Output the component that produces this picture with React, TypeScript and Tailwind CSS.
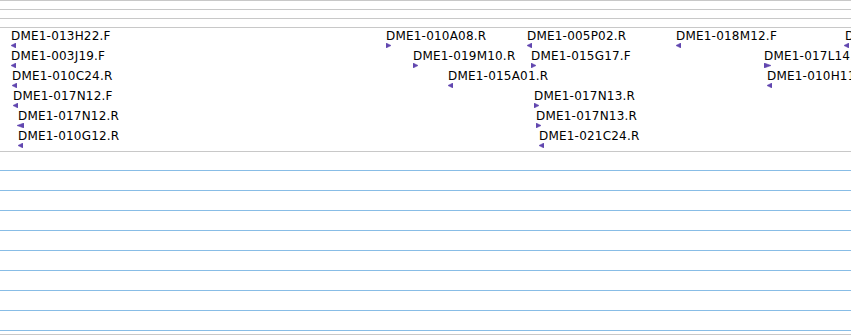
type Feature = { label: string; x: number; tx: number; row: number; dir: "L" | "R"; wide?: boolean };

const features: Feature[] = [
  { label: "DME1-013H22.F", x: 11, tx: 11, row: 0, dir: "L" },
  { label: "DME1-010A08.R", x: 386, tx: 386, row: 0, dir: "R" },
  { label: "DME1-005P02.R", x: 527, tx: 527, row: 0, dir: "L" },
  { label: "DME1-018M12.F", x: 676, tx: 676, row: 0, dir: "L" },
  { label: "DME1-009B07.R", x: 845, tx: 844, row: 0, dir: "L" },
  { label: "DME1-003J19.F", x: 11, tx: 11, row: 1, dir: "L" },
  { label: "DME1-019M10.R", x: 413, tx: 413, row: 1, dir: "R" },
  { label: "DME1-015G17.F", x: 531, tx: 531, row: 1, dir: "R" },
  { label: "DME1-017L14.F", x: 764, tx: 764, row: 1, dir: "R", wide: true },
  { label: "DME1-010C24.R", x: 12, tx: 12, row: 2, dir: "L" },
  { label: "DME1-015A01.R", x: 448, tx: 448, row: 2, dir: "L" },
  { label: "DME1-010H11.R", x: 767, tx: 767, row: 2, dir: "L" },
  { label: "DME1-017N12.F", x: 13, tx: 13, row: 3, dir: "L" },
  { label: "DME1-017N13.R", x: 534, tx: 534, row: 3, dir: "R" },
  { label: "DME1-017N12.R", x: 18, tx: 17, row: 4, dir: "L", wide: true },
  { label: "DME1-017N13.R", x: 536, tx: 536, row: 4, dir: "R" },
  { label: "DME1-010G12.R", x: 18, tx: 18, row: 5, dir: "L" },
  { label: "DME1-021C24.R", x: 539, tx: 539, row: 5, dir: "L" },
];

// strand arrow drawn under each clone label
function Arrow({ dir, wide }: { dir: "L" | "R"; wide?: boolean }) {
  const w = wide ? 7 : 5;
  const pts = dir === "L" ? `0,2.5 ${w},0 ${w},5` : `0,0 ${w},2.5 0,5`;
  return (
    <svg width={w} height={5} viewBox={`0 0 ${w} 5`} className="block">
      <polygon points={pts} fill="#6247b0" stroke="#6247b0" strokeWidth={0.6} strokeLinejoin="round" />
    </svg>
  );
}

export default function App() {
  const blueRows = [0, 1, 2, 3, 4, 5, 6, 7];
  return (
    <div className="flex h-[335px] w-[851px] flex-col overflow-hidden bg-white">
      <div className="h-[9px] shrink-0 border-t border-[#c8c8c8]" />
      <div className="h-[9px] shrink-0 border-t border-[#c8c8c8]" />
      <div className="h-[9px] shrink-0 border-t border-[#c8c8c8]" />
      <div className="relative h-[124px] shrink-0 border-t border-[#c8c8c8] font-['DejaVu_Sans',sans-serif] text-[12px] leading-[14px] tracking-[0.2px] text-black">
        {features.map((f, i) => (
          <div key={i}>
            <span className="absolute whitespace-nowrap" style={{ left: f.x, top: 1 + f.row * 20 }}>
              {f.label}
            </span>
            <span className="absolute" style={{ left: f.tx, top: 15 + f.row * 20 }}>
              <Arrow dir={f.dir} wide={f.wide} />
            </span>
          </div>
        ))}
      </div>
      <div className="h-[19px] shrink-0 border-t border-[#c8c8c8]" />
      {blueRows.map((r) => (
        <div key={r} className="h-[20px] shrink-0 border-t border-[#88bde6]" />
      ))}
      <div className="h-[4px] shrink-0 border-t border-[#88bde6]" />
      <div className="h-[1px] shrink-0 border-t border-[#c8c8c8]" />
    </div>
  );
}
